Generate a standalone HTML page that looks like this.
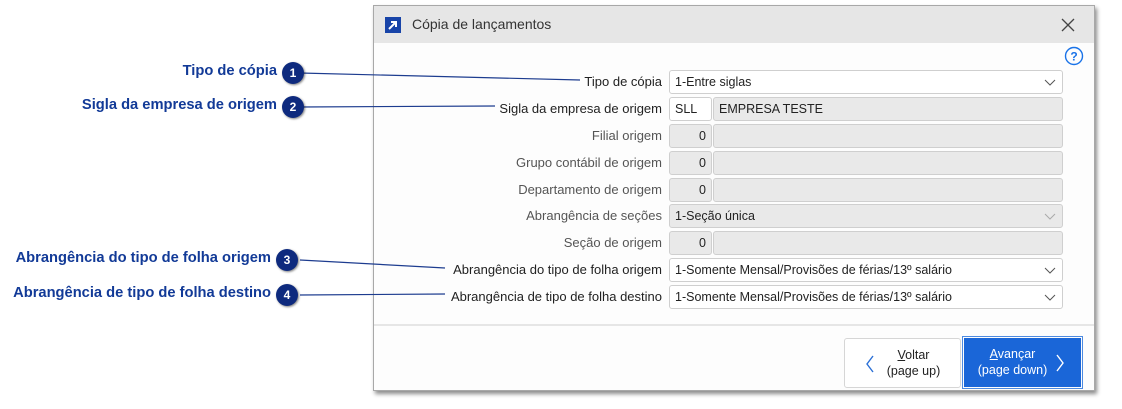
<!DOCTYPE html>
<html><head><meta charset="utf-8"><style>
*{margin:0;padding:0;box-sizing:border-box}
body{width:1122px;height:409px;background:#fff;position:relative;overflow:hidden;font-family:"Liberation Sans",sans-serif}
.dlg{position:absolute;left:373px;top:5px;width:722px;height:386px;background:#fdfdfd;border:1px solid #a8a8a8;box-shadow:2px 3px 4px rgba(0,0,0,.45)}
.tb{position:absolute;left:0;top:0;right:0;height:37px;background:#e6e6e6}
.tt{position:absolute;left:38px;top:10px;font-size:14px;color:#333}
.ico{position:absolute;left:11px;top:11px;width:16px;height:16px;background:#1844a8}
.lbl{position:absolute;right:432px;font-size:13px;color:#222;text-align:right;white-space:nowrap}
.g{color:#555}
.f{position:absolute;height:24px;border:1px solid #cfcfcf;border-radius:3px;background:#e9e9e9;font-size:12.5px;color:#222;padding:4px 5px;white-space:nowrap}
.w{background:#fff}
.n{text-align:right}
.chev{position:absolute;right:6px;top:5px}
.co{position:absolute;font-weight:bold;font-size:14.7px;color:#123a97;white-space:nowrap;text-align:right}
.c{position:absolute;width:22px;height:22px;border-radius:50%;background:#0e2a7e;color:#fff;font-weight:bold;font-size:12px;text-align:center;line-height:22px;box-shadow:1px 1px 2px rgba(0,0,0,.5);z-index:3}
.btn{position:absolute;font-size:12.5px;text-align:center;line-height:16px}
</style></head><body>
<div class="co" style="right:845px;top:63px">Tipo de cópia</div>
<div class="co" style="right:845px;top:97px">Sigla da empresa de origem</div>
<div class="co" style="right:851px;top:250px">Abrangência do tipo de folha origem</div>
<div class="co" style="right:851px;top:285px">Abrangência de tipo de folha destino</div>
<div class="c" style="left:282px;top:62px">1</div>
<div class="c" style="left:282px;top:96px">2</div>
<div class="c" style="left:276px;top:249px">3</div>
<div class="c" style="left:276px;top:284px">4</div>
<div class="dlg">
<div class="tb"><div class="ico"><svg width="16" height="16"><path d="M4 12 L11 5 M6 5 H11 V10" stroke="#fff" stroke-width="2" fill="none"/></svg></div><div class="tt">Cópia de lançamentos</div>
<svg style="position:absolute;right:19px;top:12px" width="14" height="14"><path d="M1 1L13 13M13 1L1 13" stroke="#444" stroke-width="1.3"/></svg></div>
<svg style="position:absolute;right:10px;top:40px" width="20" height="20"><circle cx="10" cy="10" r="8.5" stroke="#1a73e8" stroke-width="1.4" fill="none"/><text x="10" y="14.5" font-size="12" font-weight="bold" text-anchor="middle" fill="#1a73e8" font-family="Liberation Sans">?</text></svg>
<div class="lbl" style="top:68px">Tipo de cópia</div>
<div class="lbl" style="top:95px">Sigla da empresa de origem</div>
<div class="lbl g" style="top:122px">Filial origem</div>
<div class="lbl g" style="top:149px">Grupo contábil de origem</div>
<div class="lbl g" style="top:176px">Departamento de origem</div>
<div class="lbl g" style="top:202px">Abrangência de seções</div>
<div class="lbl g" style="top:229px">Seção de origem</div>
<div class="lbl" style="top:256px">Abrangência do tipo de folha origem</div>
<div class="lbl" style="top:283px">Abrangência de tipo de folha destino</div>
<div class="f w" style="left:295px;top:64px;width:394px">1-Entre siglas<svg class="chev" width="12" height="12"><path d="M1 4L6 9L11 4" stroke="#555" fill="none"/></svg></div>
<div class="f w" style="left:295px;top:91px;width:43px">SLL</div>
<div class="f" style="left:339px;top:91px;width:350px">EMPRESA TESTE</div>
<div class="f n" style="left:295px;top:118px;width:43px">0</div><div class="f" style="left:339px;top:118px;width:350px"></div>
<div class="f n" style="left:295px;top:145px;width:43px">0</div><div class="f" style="left:339px;top:145px;width:350px"></div>
<div class="f n" style="left:295px;top:172px;width:43px">0</div><div class="f" style="left:339px;top:172px;width:350px"></div>
<div class="f" style="left:295px;top:198px;width:394px">1-Seção única<svg class="chev" width="12" height="12"><path d="M1 4L6 9L11 4" stroke="#aaa" fill="none"/></svg></div>
<div class="f n" style="left:295px;top:225px;width:43px">0</div><div class="f" style="left:339px;top:225px;width:350px"></div>
<div class="f w" style="left:295px;top:252px;width:394px">1-Somente Mensal/Provisões de férias/13º salário<svg class="chev" width="12" height="12"><path d="M1 4L6 9L11 4" stroke="#555" fill="none"/></svg></div>
<div class="f w" style="left:295px;top:279px;width:394px">1-Somente Mensal/Provisões de férias/13º salário<svg class="chev" width="12" height="12"><path d="M1 4L6 9L11 4" stroke="#555" fill="none"/></svg></div>
<div style="position:absolute;left:0;right:0;top:318px;height:2px;background:#e6e6e6"></div>
<div class="btn" style="left:470px;top:332px;width:117px;height:50px;border:1px solid #d6d6d6;border-radius:3px;background:#fff;color:#222;padding-top:8px;padding-left:22px">
<svg style="position:absolute;left:20px;top:16px" width="10" height="18"><path d="M8 1L2 9L8 17" stroke="#2a6fd6" stroke-width="1.4" fill="none"/></svg><u>V</u>oltar<br>(page up)</div>
<div style="position:absolute;left:588px;top:330px;width:121px;height:53px;border:1px solid #4d8ae0"></div>
<div class="btn" style="left:590px;top:332px;width:117px;height:49px;background:#1a66d8;color:#fff;padding-top:8px;padding-right:20px">
<svg style="position:absolute;right:16px;top:16px" width="10" height="18"><path d="M2 1L8 9L2 17" stroke="#fff" stroke-width="1.4" fill="none"/></svg><u>A</u>vançar<br>(page down)</div>
</div>
<svg width="1122" height="409" style="position:absolute;left:0;top:0;z-index:2">
<g stroke="#1d3c8f" stroke-width="1.2" fill="none">
<line x1="300" y1="73" x2="580" y2="80"/>
<line x1="300" y1="107" x2="495" y2="106"/>
<line x1="300" y1="260" x2="445" y2="268"/>
<line x1="300" y1="295" x2="445" y2="294"/>
</g></svg>
</body></html>
